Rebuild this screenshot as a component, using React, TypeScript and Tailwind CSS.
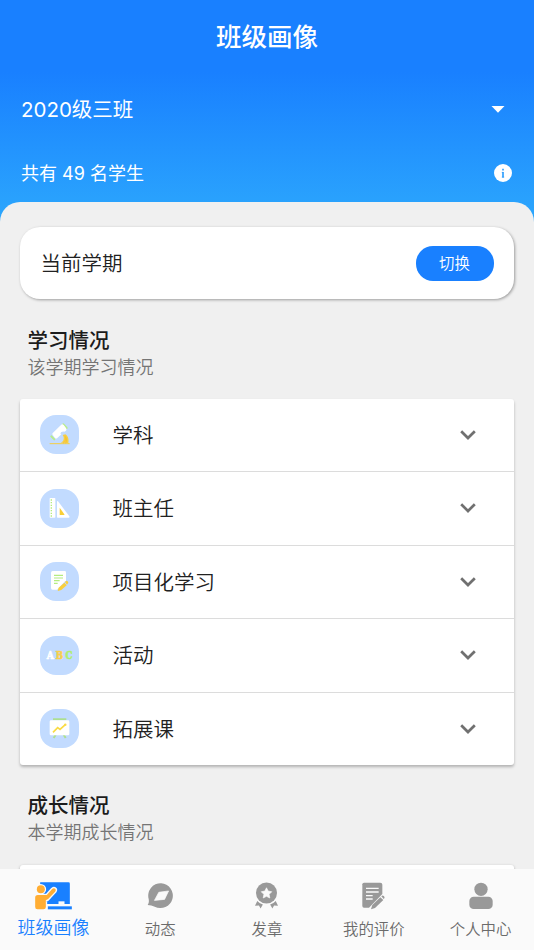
import type { ReactNode } from 'react';

function MicroscopeIcon() {
  return (
    <svg viewBox="0 0 117 117" className="size-full">
      <path d="M29 86h60" stroke="#f3ce45" strokeWidth="3" />
      <path d="M62 83c8-3 10-9 9-17l-3-6 8-2c9 6 11 16 9 26" fill="#f7cf45" />
      <path d="M69 85c9-6 9-15 6-23M77 85c4-7 3-14 1-18" fill="none" stroke="#f3bd2e" strokeWidth="2" />
      <path d="M70 28l10 11" stroke="#b9ec8b" strokeWidth="6" strokeLinecap="round" />
      <path d="M34 64l9 9" stroke="#b9ec8b" strokeWidth="6" strokeLinecap="round" />
      <path d="M63 30q4-4 8 0l7 9q3 4 0 8l-5 3q-5-2-8 1t-1 7L52 69q-4 3-7 0l-7-9q-3-4 1-7z" fill="#fff" />
      <circle cx="66" cy="55" r="4" fill="#c2dbff" />
    </svg>
  );
}

function RulerIcon() {
  return (
    <svg viewBox="0 0 117 117" className="size-full">
      <rect x="29" y="27" width="17" height="59" rx="2" fill="#fff" />
      <path d="M34 31v53" stroke="#b4ec80" strokeWidth="4" strokeDasharray="4 4" />
      <path d="M51 38q0-4 3-1l34 45q2 4-2 4H53q-2 0-2-2z" fill="#fff" />
      <path d="M59 56l14 20q1 2-2 2H59z" fill="#f9cf36" />
    </svg>
  );
}

function NoteIcon() {
  return (
    <svg viewBox="0 0 117 117" className="size-full">
      <path d="M38 27h36q4 0 4 4v24L51 83H38q-5 0-5-5V32q0-5 5-5z" fill="#fff" />
      <path d="M42 40h27M42 48h27M42 56h17M42 64h11" stroke="#b4ec80" strokeWidth="3.5" />
      <path d="M53 87l3-10 17-15 7 8-16 14z" fill="#f9cf3b" />
      <path d="M75 60l3-3q2-2 4 0l2 2q2 2 0 5l-3 4z" fill="#f9cf3b" />
    </svg>
  );
}

function AbcIcon() {
  return (
    <svg viewBox="0 0 117 117" className="size-full font-['DejaVu_Serif',serif] text-[34px] font-bold">
      <g strokeWidth="2" textAnchor="middle">
        <text x="31" y="69" textLength="21" lengthAdjust="spacingAndGlyphs" fill="#fff" stroke="#fff">
          A
        </text>
        <text x="58" y="69" textLength="22" lengthAdjust="spacingAndGlyphs" fill="#f9cf4d" stroke="#f9cf4d">
          B
        </text>
        <text x="87" y="69" textLength="21" lengthAdjust="spacingAndGlyphs" fill="#b0ee70" stroke="#b0ee70">
          C
        </text>
      </g>
    </svg>
  );
}

function BoardIcon() {
  return (
    <svg viewBox="0 0 117 117" className="size-full">
      <path d="M39 31h40M47 77l-6 10M71 77l6 10" stroke="#addf92" strokeWidth="6" />
      <rect x="29" y="34" width="59" height="45" rx="4" fill="#fff" />
      <path d="M39 70l14-14 7 5 16-14" fill="none" stroke="#fadb45" strokeWidth="5" />
      <circle cx="76" cy="47" r="3.5" fill="#fadb45" />
    </svg>
  );
}

function TeacherIcon() {
  return (
    <svg viewBox="0 0 110 84" className="h-7 w-[37px]">
      <path d="M15 1h85q4 0 4 4v61H15z" fill="#1980ff" />
      <rect x="70" y="58" width="18" height="8" fill="#fafafa" />
      <rect x="38" y="73" width="72" height="9" fill="#1980ff" />
      <g fill="#fafafa" stroke="#fafafa" strokeWidth="8" strokeLinejoin="round">
        <circle cx="17" cy="22" r="12" />
        <path d="M0 47q0-8 8-8h27l16-18q5-4 9-1t0 9L44 46q-6 8-12 9v20q0 7-7 7H7q-7 0-7-7z" />
      </g>
      <g fill="#ffad33">
        <circle cx="17" cy="22" r="12" />
        <path d="M0 47q0-8 8-8h27l16-18q5-4 9-1t0 9L44 46q-6 8-12 9v20q0 7-7 7H7q-7 0-7-7z" />
      </g>
    </svg>
  );
}

function CompassIcon() {
  return (
    <svg viewBox="0 0 80 80" className="h-7 w-[27px]">
      <path d="M42 2a37 37 0 1 1-19 70q-10-5-21-5 5-5 3-18A37 37 0 0 1 42 2z" fill="#999" />
      <path d="M35 29l29-4-12 25-30 3z" fill="#fafafa" stroke="#fafafa" strokeWidth="2" strokeLinejoin="round" />
    </svg>
  );
}

function MedalIcon() {
  return (
    <svg viewBox="0 0 76 84" className="h-7 w-[25px]" fill="#999">
      <circle cx="38" cy="33" r="32" />
      <path d="M38 17l5 10 11 2-8 8 2 11-10-5-10 5 2-11-8-8 11-2z" fill="#fafafa" stroke="#fafafa" strokeWidth="2" strokeLinejoin="round" />
      <path d="M10 57q7 8 17 11l-7 12-5-9-12 1z" />
      <path d="M66 57q-7 8-17 11l7 12 5-9 12 1z" />
    </svg>
  );
}

function ReviewIcon() {
  return (
    <svg viewBox="0 0 69 84" className="h-7 w-[23px]" fill="#999">
      <path d="M6 2h49q6 0 6 6v28L21 77H6q-5 0-5-5V7q0-5 5-5z" />
      <path d="M12 19h38M12 30h38M12 41h20M12 51h20" stroke="#fafafa" strokeWidth="4" />
      <path d="M27 82l4-13 24-23 9 8-25 24z" />
      <path d="M58 43l2-2q3-1 6 2t1 6l-2 2z" />
    </svg>
  );
}

function UserIcon() {
  return (
    <svg viewBox="0 0 72 84" className="h-7 w-6" fill="#999">
      <circle cx="36" cy="22" r="20" />
      <rect x="1" y="44" width="70" height="37" rx="13" />
    </svg>
  );
}

const studyItems: { label: string; icon: ReactNode }[] = [
  { label: '学科', icon: <MicroscopeIcon /> },
  { label: '班主任', icon: <RulerIcon /> },
  { label: '项目化学习', icon: <NoteIcon /> },
  { label: '活动', icon: <AbcIcon /> },
  { label: '拓展课', icon: <BoardIcon /> },
];

const tabs: { label: string; icon: ReactNode }[] = [
  { label: '班级画像', icon: <TeacherIcon /> },
  { label: '动态', icon: <CompassIcon /> },
  { label: '发章', icon: <MedalIcon /> },
  { label: '我的评价', icon: <ReviewIcon /> },
  { label: '个人中心', icon: <UserIcon /> },
];

function SectionTitle({ title, hint }: { title: string; hint: string }) {
  return (
    <div className="pl-2">
      <h2 className="text-[20.5px] leading-[28px] font-medium text-[#1c1c1c]">{title}</h2>
      <p className="text-[18px] leading-[25px] font-[350] text-[#757575]">{hint}</p>
    </div>
  );
}

export default function App() {
  return (
    <div className="flex h-[950px] w-[534px] flex-col overflow-hidden bg-[#f0f0f0] font-['Inter','Noto_Sans_CJK_SC',sans-serif] text-[#212121]">
      <div className="flex min-h-0 flex-1 flex-col overflow-hidden bg-[linear-gradient(180deg,#1980ff_0px,#1980ff_72px,#2ba5fd_214px)]">
        <header className="h-[201.5px] shrink-0 text-white">
          <h1 className="flex h-[74px] items-center justify-center text-[25.5px] font-medium">班级画像</h1>
          <button type="button" className="flex h-[70px] w-full items-center justify-between pr-[29px] pl-[21px] text-[20.5px]">
            <span className="pt-[2px]">2020级三班</span>
            <svg viewBox="0 0 14 7" className="h-[7px] w-[14px]">
              <path d="M.5 0h13L7 6.7z" fill="#fff" />
            </svg>
          </button>
          <div className="flex h-[58px] items-center justify-between pr-[22px] pl-[21px] text-[18px]">
            <span className="pt-px">共有 49 名学生</span>
            <svg viewBox="0 0 18 18" className="size-[18px]">
              <circle cx="9" cy="9" r="9" fill="#fff" />
              <path d="M9 4.8v1.8M9 8v5.5" stroke="#289cfd" strokeWidth="1.6" />
              <path d="M7.8 8.4h1.4M7.8 13.1h2.4" stroke="#289cfd" strokeWidth=".8" />
            </svg>
          </div>
        </header>

        <main className="min-h-0 flex-1 overflow-hidden rounded-t-[20px] bg-[#f0f0f0] pt-[25.5px] pr-5 pl-[19.5px]">
          <div className="flex h-[72px] items-center justify-between rounded-[20px] bg-white pr-[20.5px] pl-[21px] shadow-[1px_1px_3px_rgba(0,0,0,0.35)]">
            <span className="pt-[3px] text-[20.5px] font-[350]">当前学期</span>
            <button type="button" className="h-[35px] w-[78px] rounded-[17px] bg-[#1980ff] pt-[2px] text-[15.4px] font-[350] text-white">
              切换
            </button>
          </div>

          <div className="pt-[28px]">
            <SectionTitle title="学习情况" hint="该学期学习情况" />
          </div>
          <ul className="mt-[18.5px] rounded-[3px] bg-white shadow-[0_2px_3px_rgba(0,0,0,0.26)]">
            {studyItems.map((item) => (
              <li
                key={item.label}
                className="flex h-[73.5px] items-center border-b border-[#dcdcdc] pr-[38.5px] pl-[20.5px] last:h-[72.6px] last:border-b-0"
              >
                <span className="size-[39px] rounded-[16px] bg-[#c2dbff]">{item.icon}</span>
                <span className="ml-[33.5px] flex-1 pt-[3px] text-[20.5px] font-[350]">{item.label}</span>
                <svg viewBox="0 0 16 10" className="h-[10px] w-4">
                  <path d="M1.2 1.2L8 8l6.8-6.8" fill="none" stroke="#707070" strokeWidth="2.7" />
                </svg>
              </li>
            ))}
          </ul>

          <div className="pt-[27px]">
            <SectionTitle title="成长情况" hint="本学期成长情况" />
          </div>
          <div className="mt-[19.5px] h-[74px] rounded-[3px] bg-white shadow-[0_1px_3px_rgba(0,0,0,0.3)]" />
        </main>
      </div>

      <nav className="grid h-[81px] shrink-0 grid-cols-5 bg-[#fafafa]">
        {tabs.map((tab, index) => (
          <button key={tab.label} type="button" className="flex flex-col items-center pt-[13px]">
            {tab.icon}
            <span
              className={
                index === 0
                  ? 'mt-[4px] text-[18px] leading-[27px] font-[350] whitespace-nowrap text-[#1980ff]'
                  : 'mt-[8px] text-[15.4px] leading-[23px] font-[350] whitespace-nowrap text-[#6b6b6b]'
              }
            >
              {tab.label}
            </span>
          </button>
        ))}
      </nav>
    </div>
  );
}
